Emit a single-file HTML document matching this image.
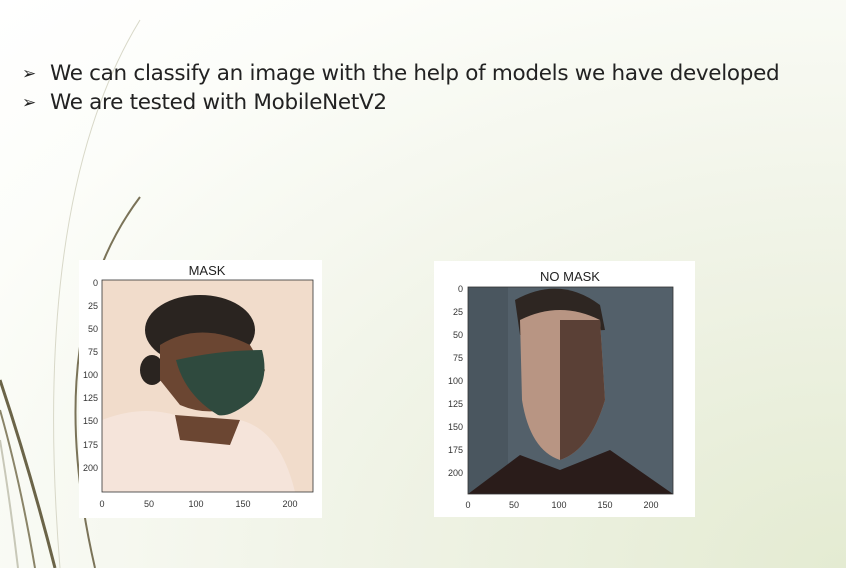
<!DOCTYPE html>
<html><head><meta charset="utf-8"><style>
html,body{margin:0;padding:0}
body{width:846px;height:568px;overflow:hidden;position:relative;font-family:"Liberation Sans","DejaVu Sans",sans-serif;background:radial-gradient(ellipse at 100% 100%,#e4ebd2 0%,#f1f4e8 45%,#fcfdf9 80%,#ffffff 100%)}
.b{position:absolute;left:50px;font-size:21.5px;color:#222;font-family:"DejaVu Sans","Liberation Sans",sans-serif;letter-spacing:-0.3px;white-space:nowrap}
.a{position:absolute;left:22px;font-size:17px;color:#222;font-family:"DejaVu Sans",sans-serif;font-weight:bold}
svg{position:absolute;left:0;top:0}
</style></head><body>
<svg width="846" height="568">
<path d="M140 20 Q30 200 60 568" stroke="#d8d8c8" stroke-width="1" fill="none"/>
<path d="M140 197 Q40 330 95 568" stroke="#7a7358" stroke-width="2" fill="none"/>
<path d="M0 380 Q30 470 55 568" stroke="#6b6448" stroke-width="3" fill="none"/>
<path d="M0 410 Q20 480 35 568" stroke="#8a8468" stroke-width="2" fill="none"/>
<path d="M0 440 Q10 500 18 568" stroke="#c8c8b8" stroke-width="2" fill="none"/>
<rect x="79" y="260" width="243" height="258" fill="#fff"/>
<rect x="102" y="280" width="211" height="212" fill="#f1dccb"/>
<path d="M102 420 Q140 405 175 415 L240 420 Q280 430 295 492 L102 492Z" fill="#f5e4da"/>
<ellipse cx="200" cy="330" rx="55" ry="35" fill="#2a2420"/>
<ellipse cx="152" cy="370" rx="12" ry="15" fill="#2a2420"/>
<path d="M160 345 Q200 320 250 345 L265 370 L250 400 Q215 420 180 405 L160 380Z" fill="#6b4632"/>
<path d="M175 415 L180 440 L230 445 L240 420Z" fill="#6b4632"/>
<path d="M176 360 Q220 350 262 350 Q270 380 252 400 Q230 418 218 415 Q185 395 176 360Z" fill="#2f4a3e"/>
<text x="207" y="275" font-size="13" text-anchor="middle" fill="#222">MASK</text>
<rect x="102" y="280" width="211" height="212" fill="none" stroke="#333" stroke-width="0.8"/>
<g font-size="9" fill="#333" text-anchor="end">
<text x="98" y="286">0</text><text x="98" y="309">25</text><text x="98" y="332">50</text><text x="98" y="355">75</text><text x="98" y="378">100</text><text x="98" y="401">125</text><text x="98" y="424">150</text><text x="98" y="448">175</text><text x="98" y="471">200</text></g>
<g font-size="9" fill="#333" text-anchor="middle">
<text x="102" y="507">0</text><text x="149" y="507">50</text><text x="196" y="507">100</text><text x="243" y="507">150</text><text x="290" y="507">200</text></g>
<rect x="434" y="261" width="261" height="256" fill="#fff"/>
<rect x="468" y="287" width="205" height="207" fill="#53606a"/>
<rect x="468" y="287" width="40" height="207" fill="#4a565f"/>
<path d="M515 300 Q560 275 600 305 L605 330 L520 335Z" fill="#2e2622"/>
<path d="M520 320 Q560 300 600 320 L605 400 Q590 450 560 460 Q530 450 522 400Z" fill="#b89583"/>
<path d="M560 320 L600 320 L605 400 Q590 450 560 460Z" fill="#5a4036"/>
<path d="M468 494 L520 455 L560 470 L610 450 L673 494Z" fill="#2a1c1a"/>
<text x="570" y="281" font-size="13" text-anchor="middle" fill="#222">NO MASK</text>
<rect x="468" y="287" width="205" height="207" fill="none" stroke="#333" stroke-width="0.8"/>
<g font-size="9" fill="#333" text-anchor="end">
<text x="463" y="292">0</text><text x="463" y="315">25</text><text x="463" y="338">50</text><text x="463" y="361">75</text><text x="463" y="384">100</text><text x="463" y="407">125</text><text x="463" y="430">150</text><text x="463" y="453">175</text><text x="463" y="476">200</text></g>
<g font-size="9" fill="#333" text-anchor="middle">
<text x="468" y="508">0</text><text x="514" y="508">50</text><text x="559" y="508">100</text><text x="605" y="508">150</text><text x="651" y="508">200</text></g>
</svg>
<div class="a" style="top:64px">➢</div>
<div class="a" style="top:93px">➢</div>
<div class="b" style="top:61px">We can classify an image with the help of models we have developed</div>
<div class="b" style="top:90px">We are tested with MobileNetV2</div>
</body></html>
